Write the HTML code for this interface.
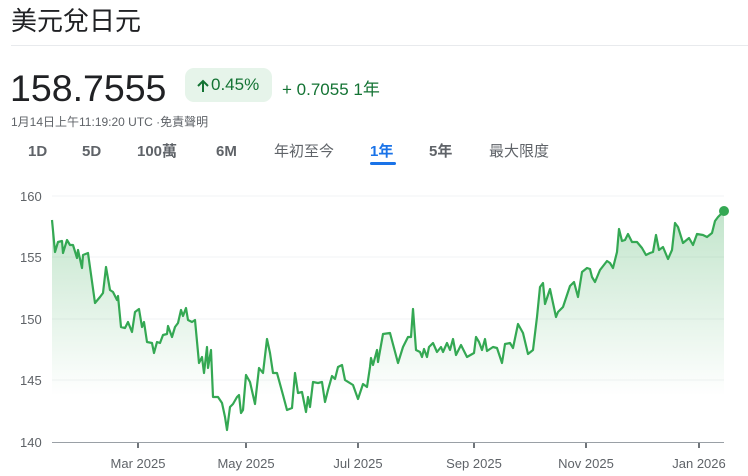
<!DOCTYPE html>
<html><head><meta charset="utf-8"><style>
body{margin:0;width:748px;height:476px;background:#fff;font-family:"Liberation Sans","Noto Sans CJK TC",sans-serif;position:relative;overflow:hidden}
.a{position:absolute;white-space:nowrap}
.tab{position:absolute;top:142px;height:20px;line-height:20px;font-size:15px;color:#5f6368;font-weight:bold}
.tabc{font-weight:normal}
</style></head><body>
<div class="a" style="left:11px;top:1px;font-size:26px;color:#202124">美元兌日元</div>
<div class="a" style="left:11px;top:45px;width:737px;height:1px;background:#e8eaed"></div>
<div class="a" style="left:10px;top:67px;font-size:37.5px;color:#202124">158.7555</div>
<div class="a" style="left:185px;top:68px;width:87px;height:34px;background:#e6f4ea;border-radius:9px"></div>
<svg class="a" style="left:196px;top:78px" width="14" height="16"><path d="M7 14V3M2 8l5-5 5 5" fill="none" stroke="#137333" stroke-width="2"/></svg>
<div class="a" style="left:211px;top:75px;font-size:17px;color:#137333">0.45%</div>
<div class="a" style="left:282px;top:75px;font-size:17px;color:#137333">+ 0.7055 1年</div>
<div class="a" style="left:11px;top:113px;font-size:12px;color:#5f6368">1月14日上午11:19:20 UTC ·免責聲明</div>
<div class="tab" style="left:28px">1D</div>
<div class="tab" style="left:82px">5D</div>
<div class="tab" style="left:137px">100萬</div>
<div class="tab" style="left:216px">6M</div>
<div class="tab tabc" style="left:274px">年初至今</div>
<div class="tab" style="left:370px;color:#1a73e8">1年</div>
<div class="a" style="left:370px;top:162px;width:26px;height:3px;background:#1a73e8;border-radius:2px"></div>
<div class="tab" style="left:429px">5年</div>
<div class="tab tabc" style="left:489px">最大限度</div>
<svg class="a" style="left:0;top:0" width="748" height="476">
<defs><linearGradient id="g" x1="0" y1="0" x2="0" y2="1" gradientUnits="objectBoundingBox"><stop offset="0" stop-color="#34a853" stop-opacity="0.3"/><stop offset="0.8" stop-color="#34a853" stop-opacity="0"/></linearGradient></defs>
<g stroke="#f1f3f4" stroke-width="1">
<line x1="52" y1="196" x2="724" y2="196"/><line x1="52" y1="257" x2="724" y2="257"/><line x1="52" y1="319" x2="724" y2="319"/><line x1="52" y1="380" x2="724" y2="380"/></g>
<g font-size="13" fill="#5f6368" font-family="Liberation Sans,sans-serif">
<text x="20" y="201">160</text><text x="20" y="262">155</text><text x="20" y="324">150</text><text x="20" y="385">145</text><text x="20" y="447">140</text>
<text x="138" y="468" text-anchor="middle">Mar 2025</text><text x="246" y="468" text-anchor="middle">May 2025</text><text x="358" y="468" text-anchor="middle">Jul 2025</text><text x="474" y="468" text-anchor="middle">Sep 2025</text><text x="586" y="468" text-anchor="middle">Nov 2025</text><text x="699" y="468" text-anchor="middle">Jan 2026</text></g>
<polygon fill="url(#g)" points="52,442 52,220 55,252 58,242 62,241 63,253 67,240 70,245 73,245 77,258 78,250 82,268 83,255 88,253 95,303 100,297 103,293 106,267 110,290 113,292 117,300 118,296 121,327 125,328 128,322 132,332 135,312 139,309 142,327 144,322 147,342 152,343 154,353 157,342 160,343 163,335 167,334 168,326 172,337 175,327 178,323 181,310 183,316 186,308 188,320 192,322 195,320 199,363 202,357 204,373 207,347 208,368 211,350 213,397 218,397 222,403 225,417 227,430 230,407 233,404 237,397 239,395 241,413 243,410 246,375 250,382 255,404 259,368 263,373 267,339 270,353 273,373 277,373 283,395 287,410 292,408 295,373 298,393 302,392 306,412 308,397 310,407 313,382 318,383 322,382 325,402 328,390 332,376 335,379 338,367 342,365 345,380 353,385 358,399 363,384 367,387 370,367 371,358 373,365 377,350 378,362 383,334 390,333 398,363 403,347 408,337 411,337 413,309 416,350 420,352 422,357 424,349 427,357 429,347 433,343 437,352 441,347 443,352 447,343 450,350 453,339 456,355 461,345 467,357 474,353 476,337 479,342 482,350 485,339 487,351 493,347 497,348 502,363 505,344 510,343 513,348 518,324 523,333 528,354 533,350 537,317 540,287 543,283 545,304 550,289 556,317 558,312 563,307 567,295 570,286 574,282 578,297 582,272 587,268 590,269 592,277 595,282 600,270 607,261 610,263 613,268 617,252 619,229 622,241 625,240 628,234 632,242 637,242 642,248 646,255 650,253 653,252 656,235 659,250 663,247 668,259 672,250 675,223 678,227 683,243 689,238 693,245 697,234 703,235 707,237 712,233 715,221 718,217 724,211 724,442"/>
<polyline fill="none" stroke="#34a853" stroke-width="2.2" stroke-linejoin="round" points="52,220 55,252 58,242 62,241 63,253 67,240 70,245 73,245 77,258 78,250 82,268 83,255 88,253 95,303 100,297 103,293 106,267 110,290 113,292 117,300 118,296 121,327 125,328 128,322 132,332 135,312 139,309 142,327 144,322 147,342 152,343 154,353 157,342 160,343 163,335 167,334 168,326 172,337 175,327 178,323 181,310 183,316 186,308 188,320 192,322 195,320 199,363 202,357 204,373 207,347 208,368 211,350 213,397 218,397 222,403 225,417 227,430 230,407 233,404 237,397 239,395 241,413 243,410 246,375 250,382 255,404 259,368 263,373 267,339 270,353 273,373 277,373 283,395 287,410 292,408 295,373 298,393 302,392 306,412 308,397 310,407 313,382 318,383 322,382 325,402 328,390 332,376 335,379 338,367 342,365 345,380 353,385 358,399 363,384 367,387 370,367 371,358 373,365 377,350 378,362 383,334 390,333 398,363 403,347 408,337 411,337 413,309 416,350 420,352 422,357 424,349 427,357 429,347 433,343 437,352 441,347 443,352 447,343 450,350 453,339 456,355 461,345 467,357 474,353 476,337 479,342 482,350 485,339 487,351 493,347 497,348 502,363 505,344 510,343 513,348 518,324 523,333 528,354 533,350 537,317 540,287 543,283 545,304 550,289 556,317 558,312 563,307 567,295 570,286 574,282 578,297 582,272 587,268 590,269 592,277 595,282 600,270 607,261 610,263 613,268 617,252 619,229 622,241 625,240 628,234 632,242 637,242 642,248 646,255 650,253 653,252 656,235 659,250 663,247 668,259 672,250 675,223 678,227 683,243 689,238 693,245 697,234 703,235 707,237 712,233 715,221 718,217 724,211"/>
<circle cx="724" cy="211" r="5" fill="#34a853"/>
<line x1="52" y1="442.5" x2="724" y2="442.5" stroke="#9aa0a6" stroke-width="1"/>
<g stroke="#70757a" stroke-width="2"><line x1="138" y1="443" x2="138" y2="448"/><line x1="246" y1="443" x2="246" y2="448"/><line x1="358" y1="443" x2="358" y2="448"/><line x1="474" y1="443" x2="474" y2="448"/><line x1="586" y1="443" x2="586" y2="448"/><line x1="699" y1="443" x2="699" y2="448"/></g>
</svg>
</body></html>
